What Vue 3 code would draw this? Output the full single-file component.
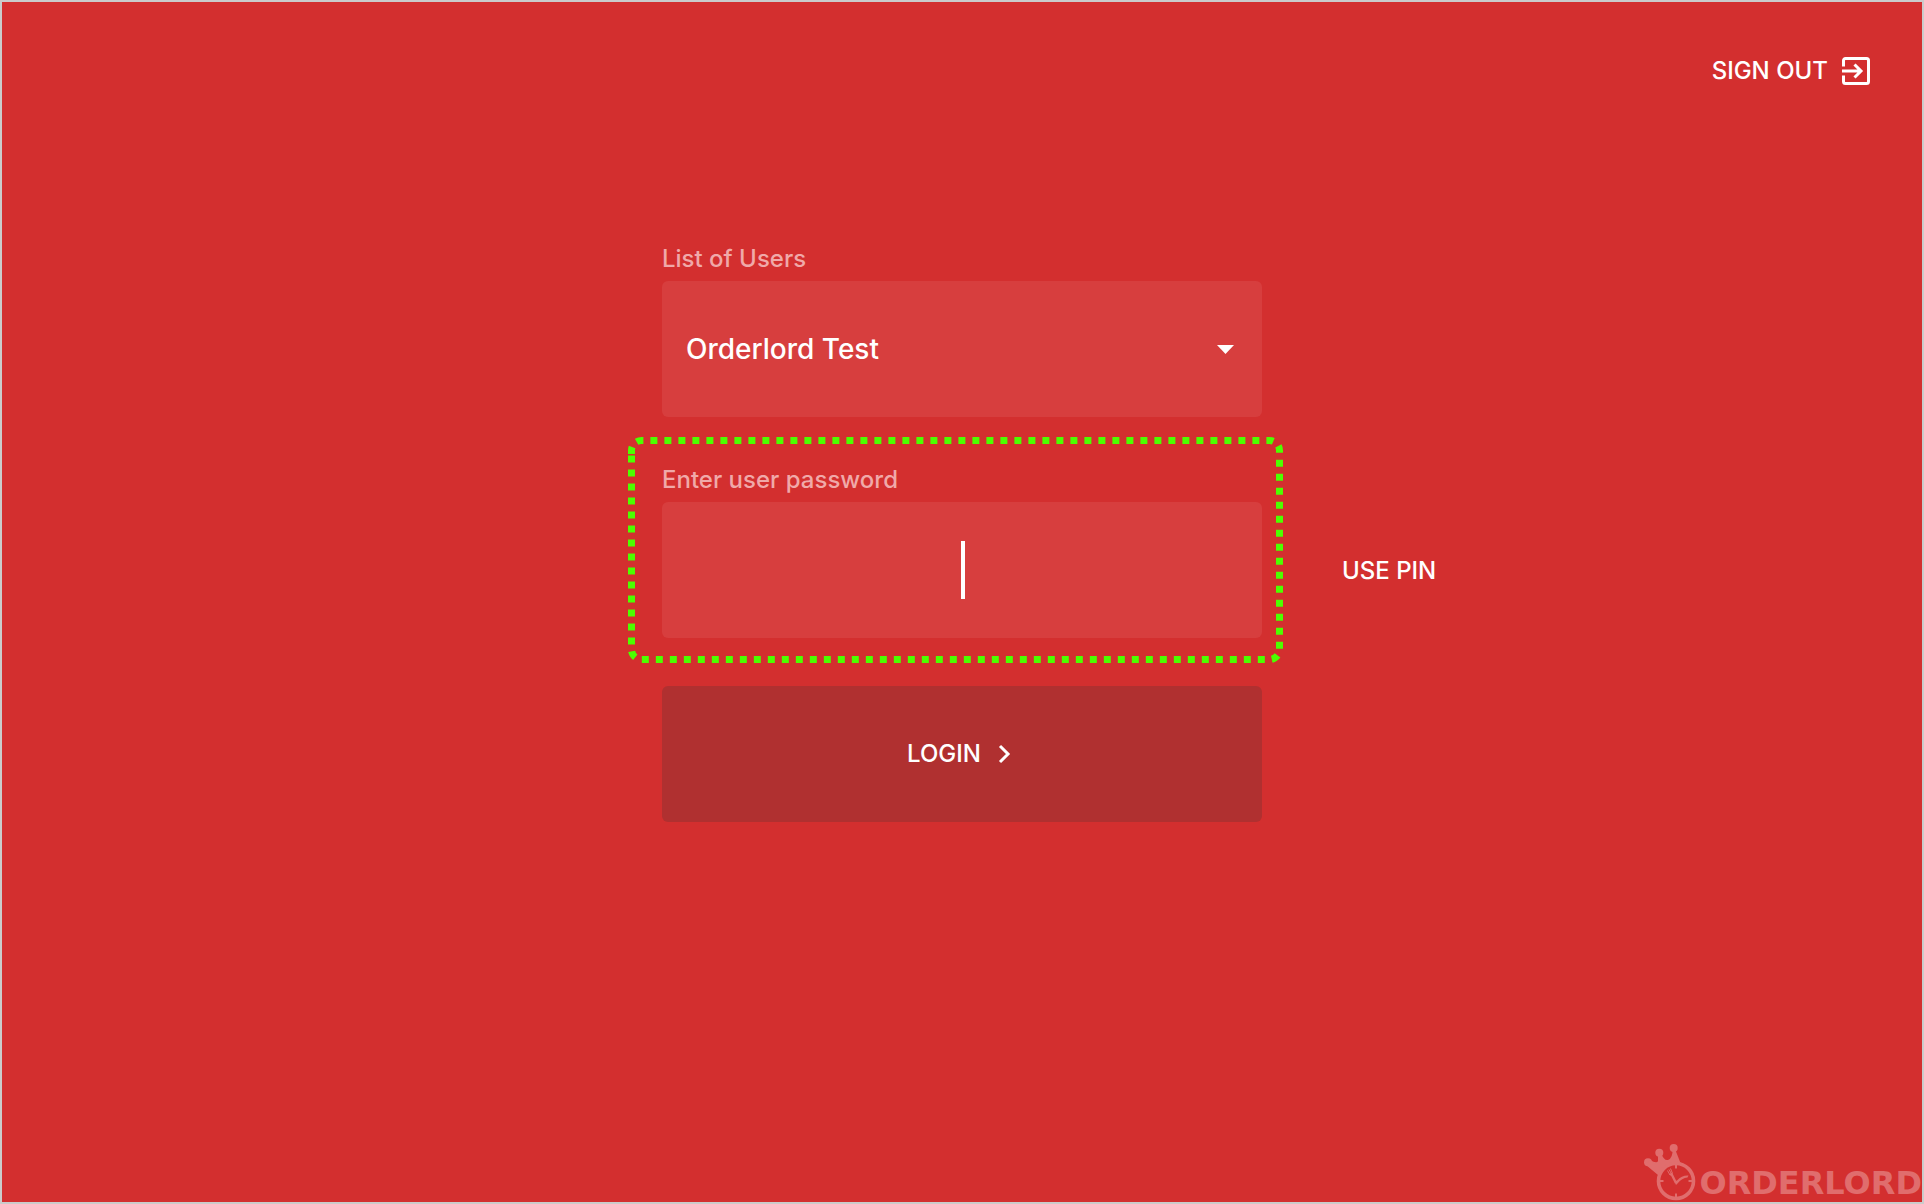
<script setup>
import { ref } from 'vue'

const users = ['Orderlord Test']
const user = ref(users[0])
const password = ref('')
</script>

<template>
  <main class="screen">
    <header class="top">
      <button class="text-button sign-out" type="button">
        <span>SIGN OUT</span>
        <svg width="28" height="28" viewBox="0 0 28 28" fill="none" stroke="currentColor" stroke-width="3" aria-hidden="true">
          <path d="M1.500 9.500V3.500a2 2 0 0 1 2-2h21a2 2 0 0 1 2 2v21a2 2 0 0 1-2 2h-21a2 2 0 0 1-2-2v-6" />
          <path d="M0 14h19M12.500 7.500l6.500 6.500-6.500 6.500" />
        </svg>
      </button>
    </header>

    <form class="login" @submit.prevent>
      <div class="field">
        <label for="user">List of Users</label>
        <div class="control">
          <select id="user" v-model="user">
            <option v-for="name in users" :key="name">{{ name }}</option>
          </select>
          <svg class="arrow" width="17" height="9" viewBox="0 0 17 9" aria-hidden="true">
            <path d="M0 0h17L8.500 9z" fill="currentColor" />
          </svg>
        </div>
      </div>

      <div class="field">
        <label for="password">Enter user password</label>
        <div class="control">
          <input id="password" v-model="password" type="password" />
          <span class="caret"></span>
          <button class="text-button use-pin" type="button">USE PIN</button>
        </div>
        <svg class="highlight" width="656" height="228" viewBox="0 0 656 228" aria-hidden="true">
          <path d="M4.500 18v-3.500a10 10 0 0 1 10-10h628a10 10 0 0 1 10 10v199a10 10 0 0 1-10 10h-628a10 10 0 0 1-10-10z" />
        </svg>
      </div>

      <button class="submit" type="submit">
        <span>LOGIN</span>
        <svg width="24" height="24" viewBox="0 0 24 24" fill="none" stroke="currentColor" stroke-width="3" aria-hidden="true">
          <path d="M7 4l8 8-8 8" />
        </svg>
      </button>
    </form>

    <footer class="brand">
      <svg width="54" height="58" viewBox="0 0 54 58" aria-hidden="true">
        <g fill="currentColor">
          <circle cx="5" cy="18.300" r="4" />
          <circle cx="16.300" cy="8.700" r="4" />
          <circle cx="30.700" cy="4" r="4" />
          <path d="M3 21L7 16Q14 20 15 17V10L18 9Q21 17 25 16Q30 14 29.500 5L32 5L37.500 19Q22 20 15 31Z" />
        </g>
        <circle cx="33" cy="37" r="17.500" fill="#d32f2f" stroke="currentColor" stroke-width="3.600" />
        <g fill="none" stroke="currentColor">
          <path stroke-width="2" d="M33 21v3.500M33 49.500V53M17 37h3.500M45.500 37H49" />
          <path stroke-width="2.400" d="M28.500 30L33 39" />
          <path stroke-width="1" d="M24.500 26.500l2.500 4.500M26 25.500l2.500 4.500M27.500 24.500l2 5" />
        </g>
        <path fill="currentColor" d="M26 30l3.500-1.500v3L28 32zM31.500 37.500L34 36.500Q39 31 45.500 31.500L44.500 33.500Q39 34 34.500 39.500L33 41z" />
      </svg>
      <span>ORDERLORD</span>
    </footer>
  </main>
</template>

<style>
body {
  margin: 0;
}
</style>

<style scoped>
.screen {
  box-sizing: border-box;
  display: flex;
  flex-direction: column;
  min-height: 100vh;
  overflow: hidden;
  border: 2px solid #cbcbcb;
  background: #d32f2f;
  color: #fff;
  font: 500 24px/28px Inter, "Noto Sans", sans-serif;
}

button,
input,
select {
  margin: 0;
  padding: 0;
  border: 0;
  outline: 0;
  background: none;
  color: inherit;
  font: inherit;
}

.top {
  display: flex;
  justify-content: flex-end;
  padding: 55px 52px 0;
}

.text-button {
  cursor: pointer;
  white-space: nowrap;
}

.sign-out {
  display: flex;
  align-items: center;
  gap: 14px;
}

.login {
  display: flex;
  flex-direction: column;
  width: 600px;
  max-width: 100%;
  margin: 160px auto 0;
}

.field {
  position: relative;
  display: flex;
  flex-direction: column;
  gap: 8px;
  margin-bottom: 48px;
}

.field label {
  color: #f0a9a9;
}

.field:first-child {
  margin-bottom: 49px;
}

.control {
  position: relative;
}

.control select,
.control input {
  display: block;
  box-sizing: border-box;
  width: 100%;
  height: 136px;
  padding: 0 24px;
  border-radius: 6px;
  background: #d73e3e;
}

.control select {
  appearance: none;
  font-size: 28px;
}

.control input {
  text-align: center;
  caret-color: transparent;
}

.arrow {
  position: absolute;
  top: 64px;
  right: 28px;
  pointer-events: none;
}

.caret {
  position: absolute;
  top: 39px;
  left: calc(50% - 1px);
  width: 4px;
  height: 58px;
  background: #fff;
}

.use-pin {
  position: absolute;
  top: 55px;
  left: calc(100% + 80px);
}

.highlight {
  position: absolute;
  top: -30px;
  left: -35px;
  fill: none;
  stroke: #4cff00;
  stroke-width: 7;
  stroke-dasharray: 7 7;
  pointer-events: none;
}

.submit {
  display: flex;
  align-items: center;
  justify-content: center;
  gap: 12px;
  height: 136px;
  border-radius: 6px;
  background: #b03030;
  cursor: pointer;
}

.brand {
  display: flex;
  align-items: flex-end;
  justify-content: flex-end;
  gap: 2px;
  margin-top: auto;
  color: #e06d6d;
  font: 700 32px/38px "DejaVu Sans", sans-serif;
}
</style>
